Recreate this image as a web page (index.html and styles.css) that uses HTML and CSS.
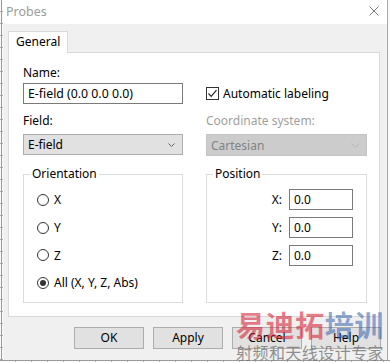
FILE: index.html
```html
<!DOCTYPE html>
<html>
<head>
<meta charset="utf-8">
<title>Probes</title>
<link rel="stylesheet" href="styles.css">
</head>
<body>
<div class="screen">
  <div class="row">
    <div class="ruler-left"></div>
    <div class="window">
      <div class="titlebar">
        <span class="title">Probes</span>
        <svg class="close" width="10" height="10" viewBox="0 0 10 10"><path d="M0.5 0.5L9.5 9.5M9.5 0.5L0.5 9.5" stroke="#7a7a7a" stroke-width="1" fill="none"/></svg>
      </div>
      <div class="content">
        <div class="tabs"><div class="tab">General</div></div>
        <div class="panel">
          <div class="grid">
            <div class="lbl r1">Name:</div>
            <div class="r1"></div>
            <div class="input wide r2">E-field (0.0 0.0 0.0)</div>
            <div class="check r2">
              <span class="box"><svg width="11" height="11" viewBox="0 0 11 11"><path d="M1.5 5.5L4.2 8.3L9.5 2.2" stroke="#222" stroke-width="1.2" fill="none"/></svg></span>
              <span>Automatic labeling</span>
            </div>
            <div class="lbl r3">Field:</div>
            <div class="lbl disabled r3">Coordinate system:</div>
            <div class="select r4"><span>E-field</span><svg width="7" height="4" viewBox="0 0 7 4"><path d="M0.5 0.5L3.5 3.5L6.5 0.5" stroke="#606060" stroke-width="1" fill="none"/></svg></div>
            <div class="select off r4"><span>Cartesian</span><svg width="9" height="5" viewBox="0 0 9 5"><path d="M0.5 0.5L4.5 4.5L8.5 0.5" stroke="#b8b8b8" stroke-width="1" fill="none"/></svg></div>
            <div class="group r5">
              <span class="legend">Orientation</span>
              <div class="radios">
                <div class="radio"><span class="circ"></span><span>X</span></div>
                <div class="radio"><span class="circ"></span><span>Y</span></div>
                <div class="radio"><span class="circ"></span><span>Z</span></div>
                <div class="radio"><span class="circ on"></span><span>All (X, Y, Z, Abs)</span></div>
              </div>
            </div>
            <div class="group r5 right">
              <span class="legend">Position</span>
              <div class="coords">
                <div class="coord"><span>X:</span><div class="input small">0.0</div></div>
                <div class="coord"><span>Y:</span><div class="input small">0.0</div></div>
                <div class="coord"><span>Z:</span><div class="input small">0.0</div></div>
              </div>
            </div>
          </div>
        </div>
        <div class="buttons">
          <div class="btn">OK</div>
          <div class="btn">Apply</div>
          <div class="btn">Cancel</div>
          <div class="btn">Help</div>
        </div>
      </div>
    </div>
    <div class="edge-right"></div>
  </div>
  <div class="ruler-bottom"></div>
  <div class="watermark">
    <div class="wm1"><span class="red">易迪拓</span><span class="blue">培训</span></div>
    <div class="wm2">射频和天线设计专家</div>
  </div>
</div>
</body>
</html>
```
FILE: styles.css
```css
* { box-sizing: border-box; }
html, body { margin: 0; padding: 0; }
body {
  font-family: "Noto Sans", "Open Sans", sans-serif;
  font-size: 12px;
  color: #000;
  background: #fafafa;
}
.screen {
  position: relative;
  width: 390px;
  height: 362px;
  overflow: hidden;
  background: #fafafa;
}
.row { display: flex; height: 360px; }
.ruler-left {
  width: 3px;
  background:
    linear-gradient(to right, transparent 1px, #9a9a9a 1px, #9a9a9a 2px, transparent 2px),
    repeating-linear-gradient(to bottom, transparent 0, transparent 11px, #b0b0b0 11px, #b0b0b0 12px);
}
.window {
  width: 384px;
  height: 360px;
  background: #f0f0f0;
  display: flex;
  flex-direction: column;
}
.edge-right { width: 1px; background: #a9a9a9; }
.ruler-bottom {
  height: 2px;
  background:
    linear-gradient(to bottom, #9a9a9a 1px, transparent 1px),
    repeating-linear-gradient(to right, transparent 0, transparent 15px, #b0b0b0 15px, #b0b0b0 16px);
}
.titlebar {
  height: 24px;
  background: #fff;
  display: flex;
  align-items: center;
  justify-content: space-between;
  padding: 0 8px 0 3px;
}
.title { color: #9b9b9b; font-size: 12.5px; line-height: 16px; }
.close { margin-top: -2px; }
.content { flex: 1; padding: 7px 7px 0 5px; }
.tabs { display: flex; }
.tab {
  position: relative;
  z-index: 1;
  height: 22px;
  margin-bottom: -1px;
  padding: 2px 7px 0 7px;
  background: #fff;
  border: 1px solid #d9d9d9;
  border-bottom: none;
  line-height: 16px;
}
.panel {
  height: 265px;
  background: #fff;
  border: 1px solid #d9d9d9;
  padding: 12px 0 0 14px;
}
.grid {
  display: grid;
  grid-template-columns: 160px 161px;
  column-gap: 23px;
  align-items: start;
}
.lbl { line-height: 16px; height: 16px; white-space: nowrap; }
.disabled { color: #a0a0a0; }
.r1 { height: 16px; }
.r2 { margin-top: 2px; }
.r3 { margin-top: 9px; }
.r4 { margin-top: 5px; }
.r5 { margin-top: 18px; }
.input {
  height: 21px;
  border: 1px solid #7a7a7a;
  background: #fff;
  padding: 0 4px;
  line-height: 19px;
  white-space: nowrap;
}
.input.wide { font-size: 12.3px; }
.check { height: 21px; display: flex; align-items: center; gap: 4px; }
.box {
  width: 13px; height: 13px;
  border: 1px solid #333;
  display: flex; align-items: center; justify-content: center;
  background: #fff;
}
.select {
  height: 21px;
  background: #e1e1e1;
  border: 1px solid #adadad;
  padding: 0 7px 0 4px;
  line-height: 19px;
  display: flex;
  align-items: center;
  justify-content: space-between;
}
.select.off { background: #cccccc; border-color: #c4c4c4; color: #838383; height: 22px; padding-right: 6px; }
.group {
  height: 129px;
  border: 1px solid #dcdcdc;
}
.legend {
  display: block;
  width: fit-content;
  height: 16px;
  margin: -9px 0 0 6px;
  padding: 0 2px;
  background: #fff;
  line-height: 16px;
}
.radios { padding: 4px 0 0 13px; }
.radio { height: 27.7px; display: flex; align-items: center; gap: 5px; }
.circ {
  width: 12px; height: 12px;
  border: 1px solid #333;
  border-radius: 50%;
  display: flex; align-items: center; justify-content: center;
}
.circ.on::after {
  content: "";
  width: 6px; height: 6px;
  border-radius: 50%;
  background: #333;
}
.coords { padding: 7px 13px 0 0; display: flex; flex-direction: column; gap: 7px; }
.coord { display: flex; justify-content: flex-end; align-items: center; gap: 7px; }
.input.small { width: 64px; }
.buttons {
  display: flex;
  justify-content: flex-end;
  gap: 9px;
  margin: 10px -1px 0 0;
}
.btn {
  width: 70px;
  height: 22px;
  background: #e1e1e1;
  border: 1px solid #adadad;
  text-align: center;
  line-height: 20px;
}
.watermark {
  position: absolute;
  left: 236px;
  top: 309px;
  font-family: "Noto Sans CJK SC", sans-serif;
  pointer-events: none;
}
.wm1 { font-size: 29px; line-height: 30px; font-weight: 700; letter-spacing: 0.6px; white-space: nowrap; }
.red { color: rgba(215, 40, 60, 0.6); }
.blue { color: rgba(50, 95, 170, 0.55); }
.wm2 { margin-top: 5px; font-size: 16px; line-height: 17px; letter-spacing: 0.45px; color: rgba(110, 110, 110, 0.75); white-space: nowrap; }
```
